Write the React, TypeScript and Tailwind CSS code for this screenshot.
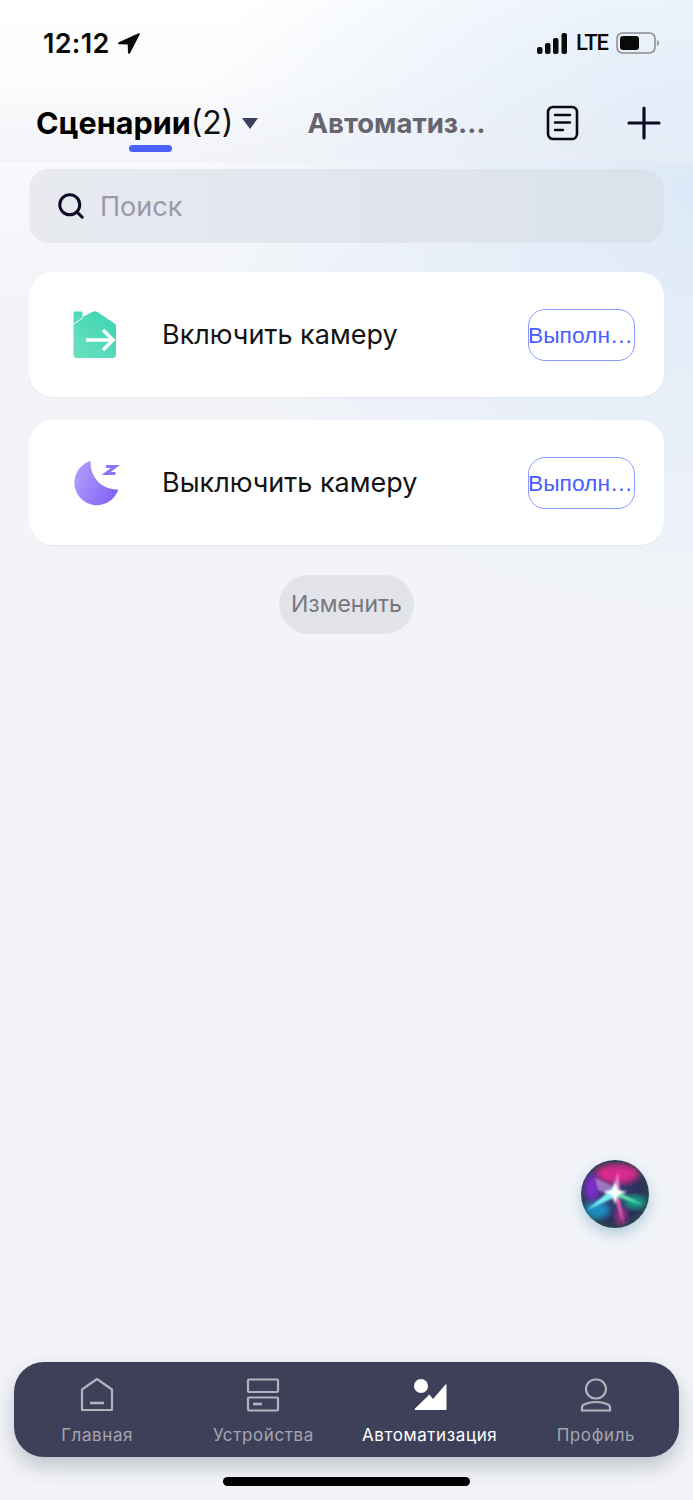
import React from 'react';
import { Search } from 'lucide-react';

const scenes = [
  { id: 'on', title: 'Включить камеру', icon: <HomeArrowIcon /> },
  { id: 'off', title: 'Выключить камеру', icon: <MoonIcon /> },
];

function LocationIcon() {
  return (
    <svg width="22" height="21" viewBox="0 0 22 21" className="ml-[8px]">
      <path d="M20.500.3.900 9.200C-.3 9.800 0 11.300 1.300 11.300l8.400.1.300 8.400c.1 1.200 1.500 1.400 2 .4L21.700 1.600c.4-.9-.4-1.700-1.200-1.300z" fill="#0a0a0a" />
    </svg>
  );
}

function SignalIcon() {
  return (
    <svg width="31" height="21" viewBox="0 0 31 21" fill="#0a0a0a">
      <rect x="0" y="14" width="5.500" height="7" rx="2" />
      <rect x="8" y="10" width="5.500" height="11" rx="2" />
      <rect x="16" y="5" width="5.500" height="16" rx="2" />
      <rect x="24.500" y="0" width="5.500" height="21" rx="2" />
    </svg>
  );
}

function BatteryIcon() {
  return (
    <svg width="44" height="22" viewBox="0 0 44 22">
      <rect x="1" y="1" width="38" height="20" rx="5.500" fill="none" stroke="#8c8c90" strokeWidth="1.500" />
      <rect x="4" y="4" width="19" height="14" rx="3" fill="#0a0a0a" />
      <path d="M41 8c1.300.4 2 1.500 2 3s-.7 2.600-2 3z" fill="#9a9a9e" />
    </svg>
  );
}

function DocIcon() {
  return (
    <svg width="33" height="36" viewBox="0 0 33 36" fill="none" stroke="#0a0a14" strokeLinecap="round">
      <rect x="2" y="2" width="29" height="32" rx="5" strokeWidth="2.600" />
      <path d="M9 10h15M9 17.500h15M9 25h8" strokeWidth="2.400" />
    </svg>
  );
}

function PlusIcon() {
  return (
    <svg width="34" height="34" viewBox="0 0 34 34" fill="none" stroke="#0c0a24" strokeWidth="3.200" strokeLinecap="round">
      <path d="M17 2v30M2 17h30" />
    </svg>
  );
}

function HomeArrowIcon() {
  return (
    <svg width="46" height="50" viewBox="0 0 46 50">
      <defs>
        <linearGradient id="homeFill" x1="0" y1="1" x2="1" y2="0">
          <stop offset="0" stopColor="#6ee0bf" />
          <stop offset="1" stopColor="#37d4b2" />
        </linearGradient>
      </defs>
      <path d="M3 1.500h6c1 0 1.500.6 1.500 1.500v4L20.500 2c1.500-1 3.500-1 5 0l17 11.500c1 .7 1.500 1.500 1.500 3V45c0 1.800-1.200 3-3 3H4.500c-1.800 0-3-1.200-3-3V3c0-1 .5-1.500 1.500-1.500z" fill="url(#homeFill)" />
      <path d="M0 15.500 11 7.500" stroke="#fff" strokeWidth="1" />
      <path d="M14 30h26M31 20l10 10-10 10" fill="none" stroke="#fff" strokeWidth="3.600" strokeLinejoin="miter" />
    </svg>
  );
}

function MoonIcon() {
  return (
    <svg width="48" height="46" viewBox="0 0 48 46">
      <defs>
        <linearGradient id="moonFill" x1="0" y1="0.300" x2="1" y2="0.700">
          <stop offset="0" stopColor="#b19bfb" />
          <stop offset="1" stopColor="#7d63f6" />
        </linearGradient>
      </defs>
      <path d="M18.700 1A22.500 22.500 0 1 0 46.300 29.500 26 26 0 0 1 18.700 1z" fill="url(#moonFill)" />
      <path d="M34 6.500h9.500l-9.500 7h9.500" fill="none" stroke="#8b74f5" strokeWidth="3" />
    </svg>
  );
}

function SiriOrb() {
  return (
    <svg width="68" height="68" viewBox="0 0 68 68">
      <defs>
        <radialGradient id="siriBase" cx="0.500" cy="0.500" r="0.500">
          <stop offset="0" stopColor="#3d3f80" />
          <stop offset="0.750" stopColor="#2c2d58" />
          <stop offset="1" stopColor="#2b4450" />
        </radialGradient>
        <filter id="siriBlur"><feGaussianBlur stdDeviation="3" /></filter>
        <filter id="siriSoft"><feGaussianBlur stdDeviation="0.800" /></filter>
        <clipPath id="siriClip"><circle cx="34" cy="34" r="34" /></clipPath>
      </defs>
      <circle cx="34" cy="34" r="34" fill="url(#siriBase)" />
      <g clipPath="url(#siriClip)">
        <ellipse cx="36" cy="14" rx="22" ry="10" fill="#d82a8e" filter="url(#siriBlur)" />
        <ellipse cx="11" cy="28" rx="8" ry="14" fill="#7a2fc4" filter="url(#siriBlur)" />
        <ellipse cx="16" cy="50" rx="13" ry="9" fill="#1f8fc0" filter="url(#siriBlur)" />
        <ellipse cx="54" cy="42" rx="11" ry="7" fill="#14a088" filter="url(#siriBlur)" />
        <ellipse cx="40" cy="56" rx="6" ry="9" fill="#a02d88" filter="url(#siriBlur)" />
        <path d="M14 18 36 28 32 36 17 30z" fill="#c9a0e6" opacity="0.650" filter="url(#siriSoft)" />
        <path d="M32 30 37 12 39 32z" fill="#f6a8dc" opacity="0.800" filter="url(#siriSoft)" />
        <path d="M32 34 38 33 43 65z" fill="#f06cb4" opacity="0.900" filter="url(#siriSoft)" />
        <path d="M6 50 33 27 39 35z" fill="#7cf0f6" filter="url(#siriSoft)" />
        <path d="M33 29 62 45 33 36z" fill="#5ce8b0" filter="url(#siriSoft)" />
        <path d="M34 22 37 30 46 32 37 35 34 44 31 35 22 32 31 30z" fill="#ffffff" filter="url(#siriSoft)" />
      </g>
    </svg>
  );
}

function TabHome({ color }: { color: string }) {
  return (
    <svg width="34" height="35" viewBox="0 0 34 35" fill="none" stroke={color} strokeWidth="2.200" strokeLinejoin="round">
      <path d="M2 12.500 17 2l15 10.500V33H2z" />
      <path d="M10 26h14" strokeWidth="2.600" />
    </svg>
  );
}

function TabDevices({ color }: { color: string }) {
  return (
    <svg width="34" height="34" viewBox="0 0 34 34" fill="none" stroke={color} strokeWidth="2.200" strokeLinejoin="round">
      <rect x="2" y="1.500" width="30" height="12.500" rx="1" />
      <rect x="2" y="19.500" width="30" height="13" rx="1" />
      <path d="M7 26h9" strokeWidth="2.600" />
    </svg>
  );
}

function TabAutomation({ color }: { color: string }) {
  return (
    <svg width="34" height="34" viewBox="0 0 34 34" fill={color}>
      <circle cx="8" cy="8" r="7" />
      <path d="M2 30.500 16.500 16.500 20 21 32.500 6.500c.5-.5 1-.3 1 .5V31c0 .6-.4 1-1 1H3c-1.200 0-1.700-.7-1-1.500z" />
    </svg>
  );
}

function TabProfile({ color }: { color: string }) {
  return (
    <svg width="32" height="34" viewBox="0 0 32 34" fill="none" stroke={color} strokeWidth="2.200">
      <rect x="6" y="1.500" width="20" height="19" rx="9.500" />
      <path d="M2 32.500v-3c0-1.500 1-2.500 2.500-3.200 3.500-1.500 7-2.300 11.500-2.300s8 .8 11.500 2.300c1.500.7 2.500 1.700 2.500 3.200v3z" />
    </svg>
  );
}

const tabs = [
  { id: 'home', label: 'Главная', Icon: TabHome, active: false },
  { id: 'devices', label: 'Устройства', Icon: TabDevices, active: false },
  { id: 'auto', label: 'Автоматизация', Icon: TabAutomation, active: true },
  { id: 'profile', label: 'Профиль', Icon: TabProfile, active: false },
];

export default function App() {
  return (
    <div className="relative flex h-[1500px] w-[693px] flex-col overflow-hidden bg-[#f2f4f8] bg-[radial-gradient(ellipse_500px_430px_at_100%_190px,#dde9f8_0%,rgba(221,233,248,0)_100%),linear-gradient(180deg,#ffffff_0px,#f2f4f8_300px)] font-['Inter','Noto_Sans',sans-serif]">
      {/* header band */}
      <div className="flex h-[162px] flex-col bg-gradient-to-b from-transparent from-50% to-[#eceef4]/50">
        <div className="flex h-[87px] items-start justify-between pl-[43px] pr-[33px] pt-[30px]">
          <div className="flex h-[26px] items-center text-[27px] font-semibold leading-none tracking-[0.3px] text-[#0a0a0a]">
            12:12
            <LocationIcon />
          </div>
          <div className="flex h-[26px] items-center">
            <SignalIcon />
            <span className="ml-[8px] mr-[8px] font-['Roboto'] text-[22px] font-medium leading-none tracking-[-1px] text-[#0a0a0a]">LTE</span>
            <BatteryIcon />
          </div>
        </div>

        <div className="flex h-[72px] items-center pl-[36px]">
          <div className="relative flex items-center">
            <span className="text-[30.5px] font-bold leading-none text-black">Сценарии</span>
            <span className="text-[32px] font-normal leading-none text-[#111]">(2)</span>
            <svg width="16" height="11" viewBox="0 0 16 11" className="ml-[8px]">
              <path d="M0 0h16L8 11z" fill="#3e4059" />
            </svg>
            <div className="absolute left-[93px] top-[38px] h-[7px] w-[43px] rounded-full bg-[#4a60ff]" />
          </div>
          <span className="ml-[50px] w-[178px] whitespace-nowrap text-[27.5px] font-bold leading-[36px] text-[#66646f]">Автоматиз…</span>
          <div className="ml-[60px]">
            <DocIcon />
          </div>
          <div className="ml-[48px]">
            <PlusIcon />
          </div>
        </div>
      </div>

      {/* content */}
      <div className="flex flex-col px-[29px] pt-[7px]">
        <div className="flex h-[74px] items-center rounded-[20px] bg-gradient-to-r from-[#e8eaf0] to-[#dbe2ec] pl-[27px]">
          <Search size={30} strokeWidth={2.400} color="#0c0a24" />
          <span className="ml-[14px] text-[27px] leading-none text-[#9a9aa8]">Поиск</span>
        </div>

        <div className="mt-[29px] flex flex-col gap-[23px]">
          {scenes.map((scene) => (
            <div key={scene.id} className="flex h-[125px] items-center rounded-[24px] bg-white pl-[43px] pr-[29px] shadow-[0_1px_1px_rgba(60,70,100,0.06)]">
              <div className="flex w-[90px] items-center">{scene.icon}</div>
              <span className="flex-1 text-[27px] leading-none text-[#141414]">{scene.title}</span>
              <button className="flex h-[52px] w-[107px] items-center rounded-[17px] border border-[#8c9bff] bg-white pt-[2px] font-['Liberation_Sans',sans-serif] text-[22.8px] leading-none text-[#4a5eff]">
                <span className="-ml-px whitespace-nowrap">Выполн…</span>
              </button>
            </div>
          ))}
        </div>

        <div className="mt-[30px] flex justify-center">
          <div className="flex h-[59px] w-[135px] items-center justify-center rounded-full bg-[#e3e4e9] text-[23px] text-[#77777f]">Изменить</div>
        </div>
      </div>

      {/* siri button */}
      <div className="absolute left-[581px] top-[1160px] rounded-full shadow-[0_6px_14px_rgba(60,130,170,0.35)]">
        <SiriOrb />
      </div>

      {/* bottom navigation */}
      <div className="mt-auto flex flex-col px-[14px] pb-[14px]">
        <div className="grid h-[95px] grid-cols-4 rounded-[30px] bg-[#3e4059] shadow-[0_10px_20px_rgba(50,55,80,0.25)]">
          {tabs.map(({ id, label, Icon, active }) => {
            const color = active ? '#ffffff' : '#b3b3bd';
            return (
              <div key={id} className="flex flex-col items-center pt-[15px]">
                <div className="flex h-[35px] items-center">
                  <Icon color={color} />
                </div>
                <span className={`mt-[12px] text-[17px] leading-[22px] tracking-[0.6px] ${active ? 'text-white' : 'text-[#a5a5b0]'}`}>{label}</span>
              </div>
            );
          })}
        </div>
        <div className="mx-auto mt-[20px] h-[9px] w-[247px] rounded-full bg-black" />
      </div>
    </div>
  );
}
